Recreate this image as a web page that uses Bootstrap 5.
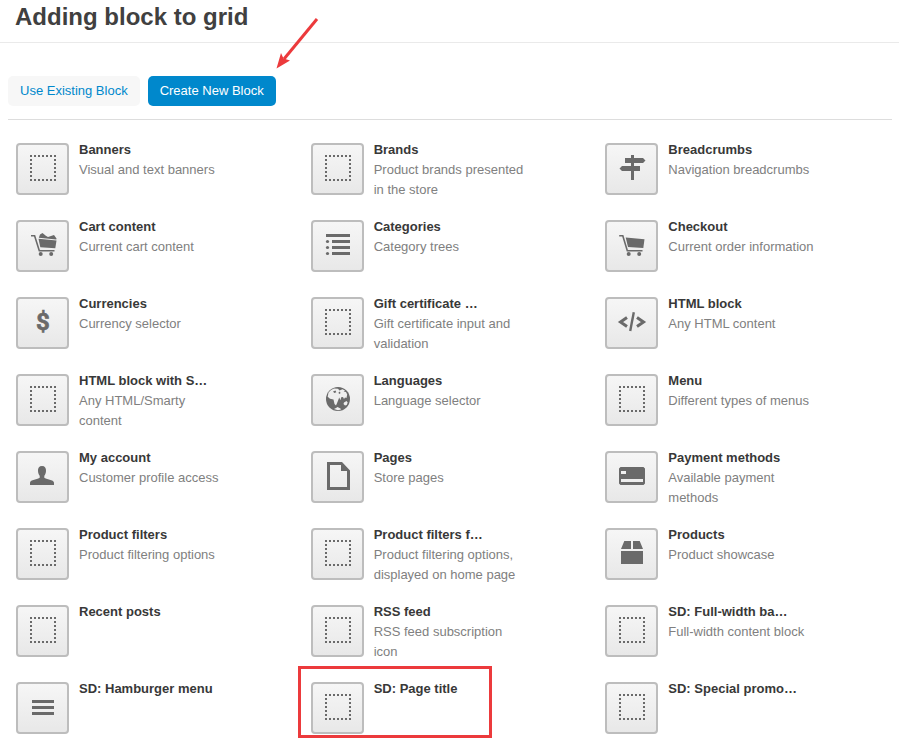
<!DOCTYPE html>
<html lang="en">
<head>
<meta charset="utf-8">
<meta name="viewport" content="width=device-width, initial-scale=1">
<title>Adding block to grid</title>
<link href="https://cdn.jsdelivr.net/npm/bootstrap@5.3.0/dist/css/bootstrap.min.css" rel="stylesheet">
<style>
body { font: 13px/20px "Liberation Sans", Arial, sans-serif; color: #333; }
.page-head { padding: 2px 15px 10px; border-bottom: 1px solid #eaeaea; }
.page-head h1 { font-size: 24px; line-height: 30px; font-weight: 700; color: #404040; }
.page-main { padding: 33px 7px 0 8px; }
.tab-bar { padding-bottom: 13px; border-bottom: 1px solid #ddd; }
.tab-bar .btn { --bs-btn-font-size: 13px; --bs-btn-line-height: 20px; --bs-btn-padding-x: 12px; --bs-btn-padding-y: 5px; --bs-btn-border-width: 0px; --bs-btn-border-radius: 5px; --bs-btn-color: #08c; --bs-btn-bg: #f7f7f7; --bs-btn-active-bg: #0088cc; --bs-btn-active-color: #fff; box-shadow: none; }
.block-grid { --bs-gutter-x: 0; --bs-gutter-y: 0; row-gap: 16px; padding-top: 19px; }
.block-item { min-height: 61px; padding-left: 8px; gap: 10px; }
.block-item:nth-last-child(-n+3) { min-height: 60px; }
.block-icon { width: 53px; height: 52px; margin-top: 4px; border: 2px solid #bdbdbd; border-radius: 4px; background: linear-gradient(#f6f6f6, #e8e8e8); color: #6a6a6a; }
.block-icon svg { display: block; width: 100%; height: 100%; fill: currentColor; }
.block-text { width: 152px; padding-top: 1px; color: #808080; }
.block-text h2 { font-size: 13px; line-height: 20px; font-weight: 700; color: #383838; white-space: nowrap; }
.highlight { left: -5px; top: -12px; width: 194px; height: 72px; border: 3px solid #ec3a3c; }
.arrow { left: 270px; top: 10px; width: 55px; height: 65px; }
</style>
</head>
<body>
<svg class="d-none" aria-hidden="true">
  <symbol id="i-dots" viewBox="2 2 49 48"><path d="M14 13h26M14 37h26M15 12v26M39 12v26" fill="none" stroke="currentColor" stroke-width="2" stroke-dasharray="2 2"/></symbol>
  <symbol id="i-sign" viewBox="2 2 49 48"><path d="M26 12h3v3h9l2.500 2.500L38 20h-9v3h6v5h-6v9h-3v-9h-9l-2.500-2.500L17 23h9v-3h-6v-5h6z"/></symbol>
  <symbol id="i-cart" viewBox="2 2 49 48"><path d="M20.700 17.500 39.500 19.200 38.300 28 23 27z"/><path d="M14.200 15.800h3.600L22.300 30.700H37.500" fill="none" stroke="currentColor" stroke-width="1.600"/><circle cx="23.700" cy="34" r="2"/><circle cx="34.200" cy="34" r="2"/></symbol>
  <symbol id="i-cartfull" viewBox="2 2 49 48"><path d="M22.500 18.800 40.500 20.500 39.300 28.300 24.300 27.300z"/><path d="M22.800 17.800 24 14.600 26.500 13 29.800 15.800 32 17 38 15 40.500 18.500 40.300 19.500z"/><path d="M15 15.800h3.600L23.300 30.700H38.500" fill="none" stroke="currentColor" stroke-width="1.600"/><circle cx="24.700" cy="34" r="2"/><circle cx="35.200" cy="34" r="2"/></symbol>
  <symbol id="i-list" viewBox="2 2 49 48"><path d="M15 14h24v3H15zM21 20h18v3H21zM21 26h18v3H21zM21 32h18v3H21z"/><circle cx="16.500" cy="21.500" r="1.600"/><circle cx="16.500" cy="27.500" r="1.600"/><circle cx="16.500" cy="33.500" r="1.600"/></symbol>
  <symbol id="i-dollar" viewBox="2 2 49 48"><text x="27" y="33" text-anchor="middle" font-family="Roboto, sans-serif" font-size="24" font-weight="700" stroke="currentColor" stroke-width=".6">$</text></symbol>
  <symbol id="i-code" viewBox="2 2 49 48"><path d="M22 20.500 15.500 25 22 29.500M32 20.500 38.500 25 32 29.500" fill="none" stroke="currentColor" stroke-width="3"/><path d="M28.800 15.200 25.200 34" stroke="currentColor" stroke-width="2.400"/></symbol>
  <symbol id="i-globe" viewBox="2 2 49 48"><circle cx="27" cy="25" r="12"/><path fill="#eee" d="M17.500 18.500 20 16l3-1.500 4 .3 1.500 1.700 3-1.300 2.500 1.300-1.300 1 2.300.5 1.200 2.500-.7 3.500-1.500-.5-1 1.500-1-2-1.800.3-.7 3-1.300-2.800-1.700 4.500-1.500 3.500-1.500-1.500-1-4.500-3.500-.8-2.300-2zM33 28.500l2.500-1.500 1.200 1.500-1 2.500-1.700.5-1.500-1.500zM23 35l2-1 1.500-1 3 1.500.5 1-3 .8z"/><path d="m22 17.500 2.500-1 .8 1.800-2 .8zM27.500 18.500l1.500-1 .5 1.800-1.500.7z"/></symbol>
  <symbol id="i-page" viewBox="2 2 49 48"><path fill-rule="evenodd" d="M16 11h15l8 8.500V39H16zM19 14v22h17V20h-6v-6z"/></symbol>
  <symbol id="i-user" viewBox="2 2 49 48"><path d="M26 15c3 0 4.200 2 4 5-.1 2-.8 3.800-1.700 4.800v2c1.500 1.700 9.700 1.700 9.700 5V34H14v-2.200c0-3.300 8.200-3.300 9.700-5v-2c-.9-1-1.600-2.800-1.700-4.800-.2-3 1-5 4-5z"/></symbol>
  <symbol id="i-card" viewBox="2 2 49 48"><path fill-rule="evenodd" d="M15.500 16h23l1.500 1.500v15L38.500 34h-23L14 32.500v-15zM16 20v3h5v-3zM16 28v3h22v-3z"/></symbol>
  <symbol id="i-box" viewBox="2 2 49 48"><path d="M19.300 13H26v8H16zM28 13h6.700L38 21H28zM16 23h22v13H16z"/></symbol>
  <symbol id="i-menu" viewBox="2 2 49 48"><path d="M16 18h22v3H16zM16 24h22v3H16zM16 30h22v3H16z"/></symbol>
</svg>

<header class="page-head"><h1 class="m-0">Adding block to grid</h1></header>
<main class="page-main">
  <div class="tab-bar d-flex gap-2">
    <button type="button" class="btn">Use Existing Block</button>
    <button type="button" class="btn active" aria-pressed="true">Create New Block</button>
  </div>

  <div class="block-grid row row-cols-3">
    <div class="block-item d-flex"><div class="block-icon flex-shrink-0"><svg><use href="#i-dots"/></svg></div><div class="block-text"><h2 class="m-0">Banners</h2>Visual and text banners</div></div>
    <div class="block-item d-flex"><div class="block-icon flex-shrink-0"><svg><use href="#i-dots"/></svg></div><div class="block-text"><h2 class="m-0">Brands</h2>Product brands presented in the store</div></div>
    <div class="block-item d-flex"><div class="block-icon flex-shrink-0"><svg><use href="#i-sign"/></svg></div><div class="block-text"><h2 class="m-0">Breadcrumbs</h2>Navigation breadcrumbs</div></div>

    <div class="block-item d-flex"><div class="block-icon flex-shrink-0"><svg><use href="#i-cartfull"/></svg></div><div class="block-text"><h2 class="m-0">Cart content</h2>Current cart content</div></div>
    <div class="block-item d-flex"><div class="block-icon flex-shrink-0"><svg><use href="#i-list"/></svg></div><div class="block-text"><h2 class="m-0">Categories</h2>Category trees</div></div>
    <div class="block-item d-flex"><div class="block-icon flex-shrink-0"><svg><use href="#i-cart"/></svg></div><div class="block-text"><h2 class="m-0">Checkout</h2>Current order information</div></div>

    <div class="block-item d-flex"><div class="block-icon flex-shrink-0"><svg><use href="#i-dollar"/></svg></div><div class="block-text"><h2 class="m-0">Currencies</h2>Currency selector</div></div>
    <div class="block-item d-flex"><div class="block-icon flex-shrink-0"><svg><use href="#i-dots"/></svg></div><div class="block-text"><h2 class="m-0">Gift certificate …</h2>Gift certificate input and validation</div></div>
    <div class="block-item d-flex"><div class="block-icon flex-shrink-0"><svg><use href="#i-code"/></svg></div><div class="block-text"><h2 class="m-0">HTML block</h2>Any HTML content</div></div>

    <div class="block-item d-flex"><div class="block-icon flex-shrink-0"><svg><use href="#i-dots"/></svg></div><div class="block-text"><h2 class="m-0">HTML block with S…</h2>Any HTML/Smarty content</div></div>
    <div class="block-item d-flex"><div class="block-icon flex-shrink-0"><svg><use href="#i-globe"/></svg></div><div class="block-text"><h2 class="m-0">Languages</h2>Language selector</div></div>
    <div class="block-item d-flex"><div class="block-icon flex-shrink-0"><svg><use href="#i-dots"/></svg></div><div class="block-text"><h2 class="m-0">Menu</h2>Different types of menus</div></div>

    <div class="block-item d-flex"><div class="block-icon flex-shrink-0"><svg><use href="#i-user"/></svg></div><div class="block-text"><h2 class="m-0">My account</h2>Customer profile access</div></div>
    <div class="block-item d-flex"><div class="block-icon flex-shrink-0"><svg><use href="#i-page"/></svg></div><div class="block-text"><h2 class="m-0">Pages</h2>Store pages</div></div>
    <div class="block-item d-flex"><div class="block-icon flex-shrink-0"><svg><use href="#i-card"/></svg></div><div class="block-text"><h2 class="m-0">Payment methods</h2>Available payment methods</div></div>

    <div class="block-item d-flex"><div class="block-icon flex-shrink-0"><svg><use href="#i-dots"/></svg></div><div class="block-text"><h2 class="m-0">Product filters</h2>Product filtering options</div></div>
    <div class="block-item d-flex"><div class="block-icon flex-shrink-0"><svg><use href="#i-dots"/></svg></div><div class="block-text"><h2 class="m-0">Product filters f…</h2>Product filtering options, displayed on home page</div></div>
    <div class="block-item d-flex"><div class="block-icon flex-shrink-0"><svg><use href="#i-box"/></svg></div><div class="block-text"><h2 class="m-0">Products</h2>Product showcase</div></div>

    <div class="block-item d-flex"><div class="block-icon flex-shrink-0"><svg><use href="#i-dots"/></svg></div><div class="block-text"><h2 class="m-0">Recent posts</h2></div></div>
    <div class="block-item d-flex"><div class="block-icon flex-shrink-0"><svg><use href="#i-dots"/></svg></div><div class="block-text"><h2 class="m-0">RSS feed</h2>RSS feed subscription icon</div></div>
    <div class="block-item d-flex"><div class="block-icon flex-shrink-0"><svg><use href="#i-dots"/></svg></div><div class="block-text"><h2 class="m-0">SD: Full-width ba…</h2>Full-width content block</div></div>

    <div class="block-item d-flex"><div class="block-icon flex-shrink-0"><svg><use href="#i-menu"/></svg></div><div class="block-text"><h2 class="m-0">SD: Hamburger menu</h2></div></div>
    <div class="block-item d-flex position-relative"><div class="block-icon flex-shrink-0"><svg><use href="#i-dots"/></svg></div><div class="block-text"><h2 class="m-0">SD: Page title</h2></div><div class="highlight position-absolute"></div></div>
    <div class="block-item d-flex"><div class="block-icon flex-shrink-0"><svg><use href="#i-dots"/></svg></div><div class="block-text"><h2 class="m-0">SD: Special promo…</h2></div></div>
  </div>
</main>
<svg class="arrow position-absolute" viewBox="270 10 55 65" aria-hidden="true"><path d="M317 19 284 59" stroke="#ec3a3c" stroke-width="3"/><path fill="#ec3a3c" d="M276.500 68.500 281 53l2.500 5.500 6.500 2z"/></svg>
<script src="https://cdn.jsdelivr.net/npm/bootstrap@5.3.0/dist/js/bootstrap.bundle.min.js"></script>
</body>
</html>
